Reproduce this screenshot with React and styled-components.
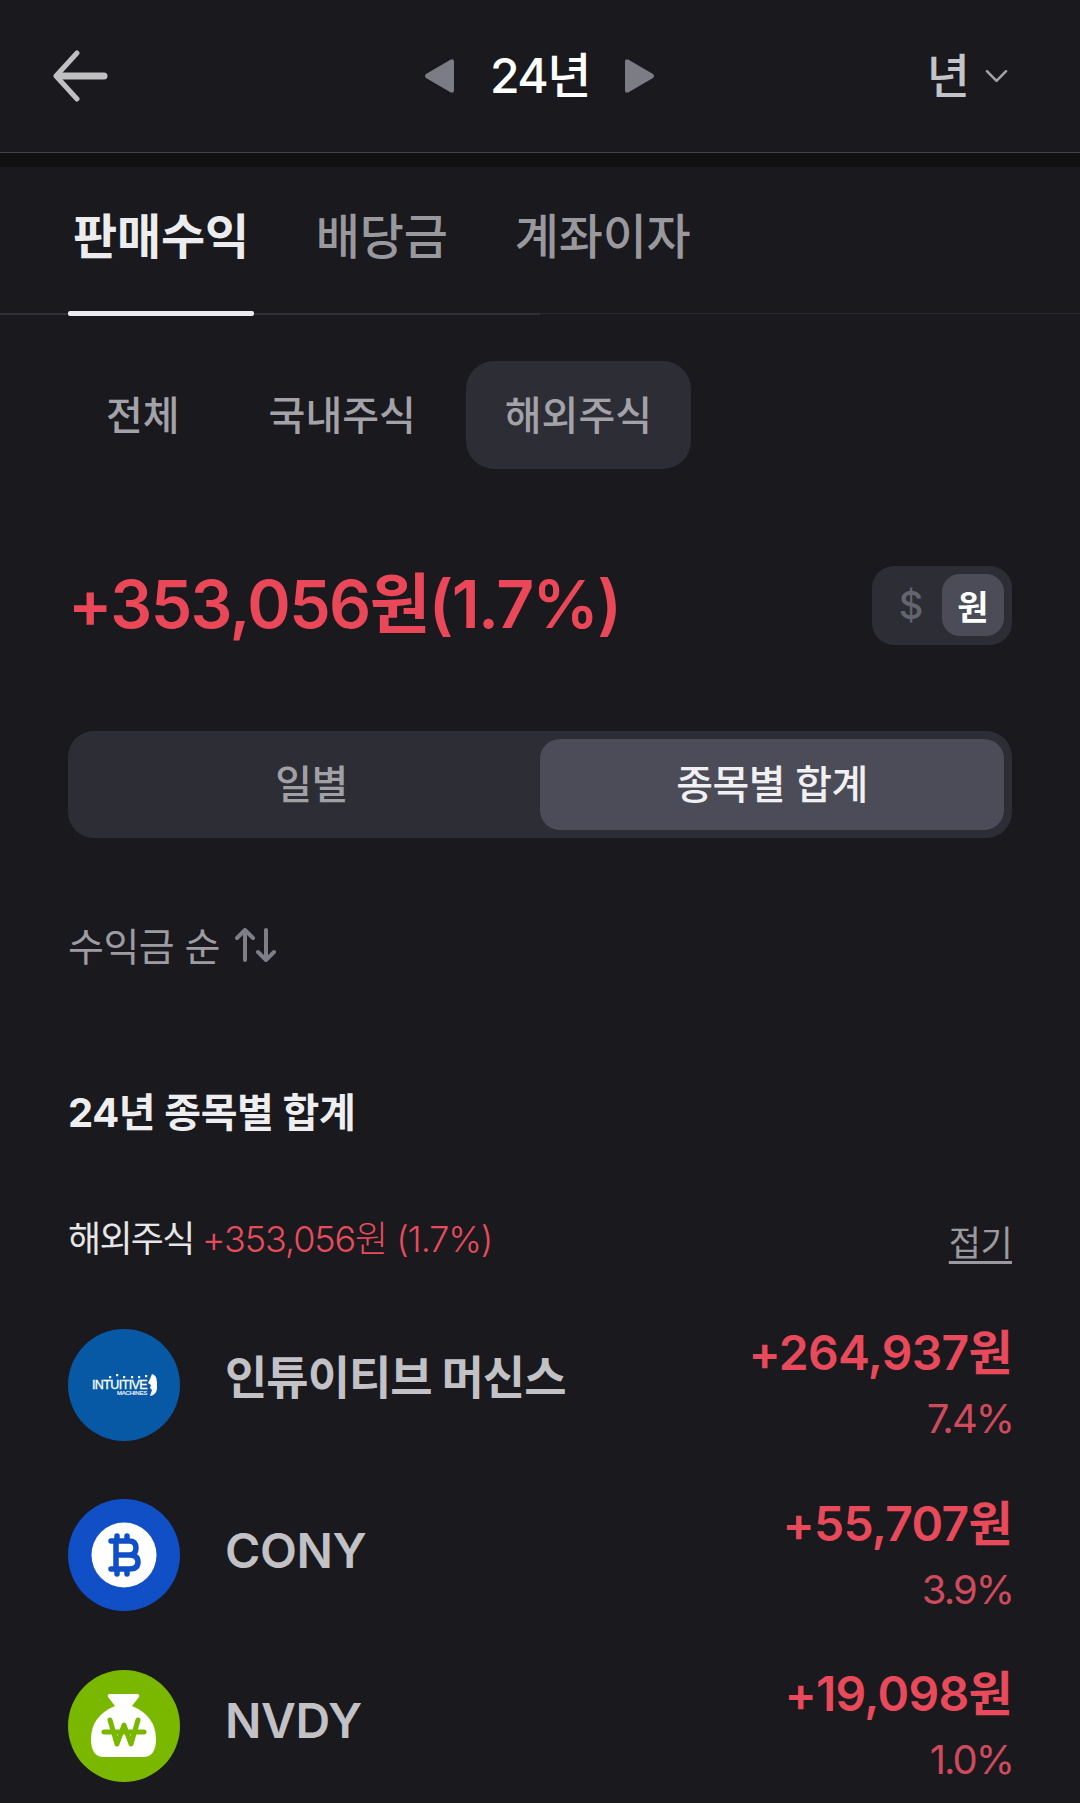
import React from "react";
import styled, { createGlobalStyle } from "styled-components";

const Global = createGlobalStyle`
  html, body { margin: 0; padding: 0; background: #19191e; }
  body { font-family: Inter, "Noto Sans CJK KR", sans-serif; }
  * { box-sizing: border-box; }
`;
const Page = styled.div`
  width: 1080px; height: 1803px; overflow: hidden; background: #19191e;
  display: flex; flex-direction: column;
`;
const Header = styled.header`
  height: 153px; flex: none; display: flex; align-items: center; justify-content: space-between;
  padding: 0 0 0 52px; border-bottom: 1px solid #414146; position: relative;
`;
const Back = styled.svg`width: 56px; height: 52px; display: block;`;
const YearNav = styled.div`
  position: absolute; left: 424px; top: 46px; display: flex; align-items: center; gap: 35px; height: 60px;
`;
const Year = styled.div`
  font-size: 48px; font-weight: 500; color: #fff; letter-spacing: -1.5px; line-height: 60px; width: 99px; white-space: nowrap;
`;
const TriIcon = styled.svg`display: block; flex: none; width: 31px; height: 36px;`;
const Period = styled.div`
  display: flex; align-items: center; gap: 15px; margin-right: 72px;
  font-size: 47px; font-weight: 500; color: #c4c4c8; line-height: 60px;
`;
const Band = styled.div`height: 14px; flex: none; background: #111114;`;
const Tabs = styled.nav`
  height: 147px; flex: none; display: flex; padding-left: 68px; gap: 57px; border-bottom: 1px solid #2a2a30; position: relative;
  &::before { content: ""; position: absolute; left: 0; bottom: -2px; width: 540px; height: 2px; background: #2f2f35; }
`;
const Tab = styled.div`
  height: 146px; padding: 38px 5px 0; font-size: 48px; font-weight: ${p => p.$active ? 700 : 500}; line-height: 64px; letter-spacing: -0.2px;
  color: ${p => p.$active ? "#ececee" : "#98989d"}; position: relative; white-space: nowrap;
  ${p => p.$active && `&::after { content: ""; position: absolute; left: 0; right: 0; bottom: -3px; height: 5px; background: #ececee; border-radius: 2px; }`}
`;
const Chips = styled.div`
  display: flex; gap: 11px; margin: 47px 0 0 67px; height: 108px; flex: none;
`;
const Chip = styled.div`
  height: 108px; padding: 0 39px 4px; border-radius: 28px; display: flex; align-items: center;
  font-size: 40px; font-weight: 500; color: #a2a2a8; letter-spacing: 0; white-space: nowrap;
  background: ${p => p.$active ? "#2c2d35" : "transparent"};
`;
const Summary = styled.div`
  display: flex; justify-content: space-between; align-items: center; margin: 96px 68px 0 68px; height: 80px; flex: none;
`;
const Total = styled.div`
  font-size: 66px; font-weight: 600; color: #ea4758; letter-spacing: -1.6px; white-space: nowrap; line-height: 80px; padding-bottom: 3px;
`;
const Currency = styled.div`
  width: 140px; height: 79px; border-radius: 22px; background: #2c2d35; padding: 8px; display: flex; align-items: center;
`;
const CurrencyItem = styled.div`
  width: 62px; height: 62px; border-radius: 18px; display: flex; align-items: center; justify-content: center;
  margin-left: ${p => p.$push ? "auto" : "0"}; font-size: ${p => p.$active ? 34 : 38}px; font-weight: ${p => p.$active ? 700 : 500};
  background: ${p => p.$active ? "#4b4c58" : "transparent"};
  color: ${p => p.$active ? "#fff" : "#63646e"};
`;
const Segment = styled.div`
  margin: 86px 68px 0; height: 107px; flex: none; background: #2c2d35; border-radius: 26px; padding: 8px; display: grid; grid-template-columns: 1fr 1fr;
`;
const SegmentItem = styled.div`
  border-radius: 20px; display: flex; align-items: center; justify-content: center;
  padding: 0 0 6px ${p => p.$active ? 0 : 7}px;
  font-size: 40px; font-weight: 500; letter-spacing: -0.5px;
  background: ${p => p.$active ? "#4b4c58" : "transparent"};
  color: ${p => p.$active ? "#f0f0f2" : "#a0a0a5"};
`;
const Sort = styled.div`
  margin: 76px 0 0 68px; height: 60px; display: flex; align-items: center; gap: 15px; flex: none;
  font-size: 39px; font-weight: 400; color: #9c9ca2; letter-spacing: -0.5px;
`;
const SortIcon = styled.svg`display: block; width: 41px; height: 34px; flex: none; margin-top: 2px;`;
const SectionTitle = styled.h2`
  margin: 109px 0 0 68px; height: 60px; flex: none; font-size: 40px; font-weight: 700; color: #eeeef0; line-height: 60px; letter-spacing: -0.4px;
`;
const SubRow = styled.div`
  margin: 68px 68px 0; height: 50px; flex: none; display: flex; justify-content: space-between; align-items: center;
`;
const SubLabel = styled.div`
  font-size: 36px; font-weight: 400; color: #e6e6e8; letter-spacing: -1.7px; white-space: nowrap;
`;
const SubValue = styled.span`color: #e84c5c; font-weight: 300; letter-spacing: -1.1px;`;
const Fold = styled.div`
  font-size: 35px; font-weight: 400; color: #9a9aa0; text-decoration: underline; text-underline-offset: 5px; letter-spacing: -0.6px; margin-top: 9px;
`;
const List = styled.ul`
  list-style: none; margin: 67px 68px 0; padding: 0; display: flex; flex-direction: column; gap: 57.5px; flex: none;
`;
const Row = styled.li`
  height: 113px; display: flex; align-items: center;
`;
const Logo = styled.div`
  width: 112px; height: 112px; border-radius: 50%; flex: none; overflow: hidden; display: flex; align-items: center; justify-content: center;
  background: ${p => p.$bg};
`;
const Name = styled.div`
  margin: 0 0 ${p => p.$latin ? 10 : 22}px 45px; font-size: ${p => p.$latin ? 48 : 46}px; font-weight: ${p => p.$latin ? 600 : 700}; color: #c2c2c6;
  letter-spacing: ${p => p.$latin ? -0.4 : -1}px; white-space: nowrap;
`;
const Values = styled.div`
  margin-left: auto; text-align: right; display: flex; flex-direction: column; gap: 11px;
`;
const Amount = styled.div`
  font-size: 48px; font-weight: 600; color: #e94a5b; line-height: 58px; letter-spacing: -0.7px; white-space: nowrap;
`;
const Rate = styled.div`
  font-size: 40px; font-weight: 400; color: #cf4a5c; line-height: 52px; letter-spacing: -2px; margin-right: -1px;
`;
const MarkWrap = styled.div`
  position: relative; width: 68px; height: 24px;
`;
const MarkDots = styled.svg`position: absolute; left: 0; top: 0; width: 68px; height: 24px;`;
const MarkName = styled.div`
  position: absolute; left: 2px; top: 6px; color: #fff; font-family: "Liberation Sans", sans-serif; font-weight: 400;
  font-size: 12.5px; line-height: 13px; letter-spacing: -0.6px; white-space: nowrap; -webkit-text-stroke: 0.3px #fff;
`;
const MarkSub = styled.div`
  position: absolute; right: 11px; top: 17.5px; color: #fff; font-family: "Liberation Sans", sans-serif; font-weight: 400;
  font-size: 6px; line-height: 7px; letter-spacing: -0.2px; white-space: nowrap; -webkit-text-stroke: 0.15px #fff;
`;

const Tri = ({ dir }) => (
  <TriIcon viewBox="0 0 31 36">
    <path d={dir === "l" ? "M30 3 V33 Q29 36 26 34 L2 20 Q0 18 2 16 L26 2 Q29 0 30 3Z" : "M1 3 V33 Q2 36 5 34 L29 20 Q31 18 29 16 L5 2 Q2 0 1 3Z"} fill="#7b7c86" />
  </TriIcon>
);

const rows = [
  { name: "인튜이티브 머신스", amount: "+264,937원", rate: "7.4%", bg: "#0759a5", logo: "im" },
  { name: "CONY", amount: "+55,707원", rate: "3.9%", bg: "#114fc6", logo: "btc", latin: true },
  { name: "NVDY", amount: "+19,098원", rate: "1.0%", bg: "#7ab800", logo: "won", latin: true },
];

const LogoArt = ({ kind }) => {
  if (kind === "im") return (
    <MarkWrap>
      <MarkDots viewBox="0 0 68 24">
        {[[19,3],[26,1],[33,3],[41,3],[48,3],[55,2]].map(([x, y]) => <rect key={x} x={x} y={y} width="2.2" height="2.2" fill="#fff" />)}
        <path d="M62 1 Q67 2 67 10 L67 16 Q66 22 60 23 L62 17 L60 15 L61 12 L58 10 L60 6Z" fill="#fff" />
      </MarkDots>
      <MarkName>INTUITIVE</MarkName>
      <MarkSub>MACHINES</MarkSub>
    </MarkWrap>
  );
  if (kind === "btc") return (
    <svg width="66" height="66" viewBox="0 0 66 66">
      <circle cx="33" cy="33" r="32.5" fill="#fff" />
      <path d="M20 19 H38 Q45 19 45 26 Q45 33 38 33 Q47 33 47 40 Q47 47 38 47 H20 M25 19 V47 M25 33 H38 M26 14 V19 M36 14 V19 M26 47 V52 M36 47 V52" fill="none" stroke="#114fc6" strokeWidth="5.5" strokeLinecap="round" strokeLinejoin="round" />
    </svg>
  );
  return (
    <svg width="66" height="66" viewBox="0 0 66 66">
      <path d="M19 1 H46 Q49 1 48 4 L41 13 Q65 23 65 46 Q65 64 52 64 H13 Q0 64 0 46 Q0 23 24 13 L17 4 Q16 1 19 1Z" fill="#fff" />
      <path d="M19 27 L26 51 L33 32 L40 51 L47 27 M13 39 H53" fill="none" stroke="#7ab800" strokeWidth="5" strokeLinecap="round" strokeLinejoin="round" />
    </svg>
  );
};

export default function App() {
  return (
    <Page>
      <Global />
      <Header>
        <Back viewBox="0 0 56 52">
          <path d="M25 3 L4 26 L25 49" fill="none" stroke="#c0c0c2" strokeWidth="5" strokeLinecap="round" strokeLinejoin="round" />
          <path d="M6 26 H52" fill="none" stroke="#c0c0c2" strokeWidth="7" strokeLinecap="round" />
        </Back>
        <YearNav>
          <Tri dir="l" />
          <Year>24년</Year>
          <Tri dir="r" />
        </YearNav>
        <Period>
          년
          <svg width="23" height="16" viewBox="0 0 24 16"><path d="M2 3 L12 13 L22 3" fill="none" stroke="#a4a4a8" strokeWidth="2.6" strokeLinecap="round" strokeLinejoin="round" /></svg>
        </Period>
      </Header>
      <Band />
      <Tabs>
        <Tab $active>판매수익</Tab>
        <Tab>배당금</Tab>
        <Tab>계좌이자</Tab>
      </Tabs>
      <Chips>
        <Chip>전체</Chip>
        <Chip>국내주식</Chip>
        <Chip $active>해외주식</Chip>
      </Chips>
      <Summary>
        <Total>+353,056원(1.7%)</Total>
        <Currency>
          <CurrencyItem>$</CurrencyItem>
          <CurrencyItem $active $push>원</CurrencyItem>
        </Currency>
      </Summary>
      <Segment>
        <SegmentItem>일별</SegmentItem>
        <SegmentItem $active>종목별 합계</SegmentItem>
      </Segment>
      <Sort>
        수익금 순
        <SortIcon viewBox="0 0 41 34">
          <path d="M10 32 V2 M2 10 L10 2 L18 10 M31 2 V32 M23 24 L31 32 L39 24" fill="none" stroke="#7d7e86" strokeWidth="4" strokeLinecap="round" strokeLinejoin="round" />
        </SortIcon>
      </Sort>
      <SectionTitle>24년 종목별 합계</SectionTitle>
      <SubRow>
        <SubLabel>해외주식 <SubValue>+353,056원 (1.7%)</SubValue></SubLabel>
        <Fold>접기</Fold>
      </SubRow>
      <List>
        {rows.map(r => (
          <Row key={r.name}>
            <Logo $bg={r.bg}><LogoArt kind={r.logo} /></Logo>
            <Name $latin={r.latin}>{r.name}</Name>
            <Values>
              <Amount>{r.amount}</Amount>
              <Rate>{r.rate}</Rate>
            </Values>
          </Row>
        ))}
      </List>
    </Page>
  );
}
